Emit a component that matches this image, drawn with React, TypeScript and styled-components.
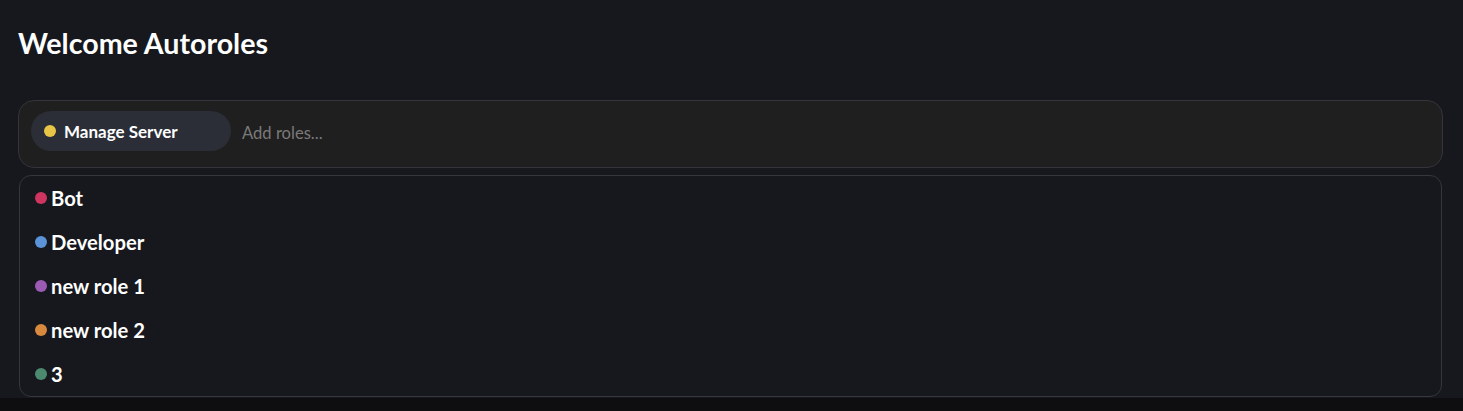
import React, {FC} from 'react';
import styled, {createGlobalStyle} from "styled-components";

const GlobalStyle = createGlobalStyle`
  html, body {
    margin: 0;
    padding: 0;
    background-color: #0e0e10;
    font-family: Lato, "Noto Sans", sans-serif;
  }
`;

const Page = styled.div`
  background-color: #17181d;
  height: 398px;
  padding: 0 20px 0 18px;
  box-sizing: border-box;
  overflow: hidden;
`;

const Title = styled.h1`
  margin: 0;
  padding-top: 26px;
  height: 100px;
  box-sizing: border-box;
  color: #fff;
  font-size: 28.6px;
  font-weight: 700;
  line-height: 34px;
`;

const InputBox = styled.div`
  display: flex;
  align-items: center;
  gap: 11px;
  height: 68px;
  box-sizing: border-box;
  padding: 0 12px 6px 12px;
  background-color: #1f1f1f;
  border: 1px solid #34343a;
  border-radius: 16px;
`;

const Chip = styled.div`
  display: flex;
  align-items: center;
  gap: 8px;
  width: 200px;
  height: 40px;
  box-sizing: border-box;
  padding: 0 13px;
  background-color: #2b2e37;
  border-radius: 20px;
  color: #fff;
  font-size: 17px;
  font-weight: 700;
`;

const Dot = styled.span<{ color: string; size: number }>`
  display: inline-block;
  flex-shrink: 0;
  width: ${p => p.size}px;
  height: ${p => p.size}px;
  border-radius: 50%;
  background-color: ${p => p.color};
`;

const Placeholder = styled.span`
  color: #7a7a7a;
  font-size: 16.6px;
  padding-top: 3px;
`;

const Dropdown = styled.div`
  margin: 7px 1px 0 1px;
  height: 222px;
  box-sizing: border-box;
  border: 1px solid #36373c;
  border-radius: 12px;
  background-color: #17181d;
`;

const Option = styled.div`
  display: flex;
  align-items: center;
  gap: 4px;
  height: 44px;
  padding-left: 15px;
  color: #fff;
  font-size: 20.2px;
  font-weight: 700;
`;

interface RoleInterface {
    id: number;
    name: string;
    color: string;
}

const roles: RoleInterface[] = [
    {id: 1, name: "Bot", color: "#cf3561"},
    {id: 2, name: "Developer", color: "#5a93d8"},
    {id: 3, name: "new role 1", color: "#9b5bb5"},
    {id: 4, name: "new role 2", color: "#d8893d"},
    {id: 5, name: "3", color: "#4b8a6f"},
];

const App: FC = () => {
    return (
        <>
            <GlobalStyle/>
            <Page>
                <Title>Welcome Autoroles</Title>
                <InputBox>
                    <Chip>
                        <Dot color="#e8c547" size={12}/>
                        Manage Server
                    </Chip>
                    <Placeholder>Add roles...</Placeholder>
                </InputBox>
                <Dropdown>
                    {roles.map(role => (
                        <Option key={role.id}>
                            <Dot color={role.color} size={12}/>
                            {role.name}
                        </Option>
                    ))}
                </Dropdown>
            </Page>
        </>
    );
};

export default App;
